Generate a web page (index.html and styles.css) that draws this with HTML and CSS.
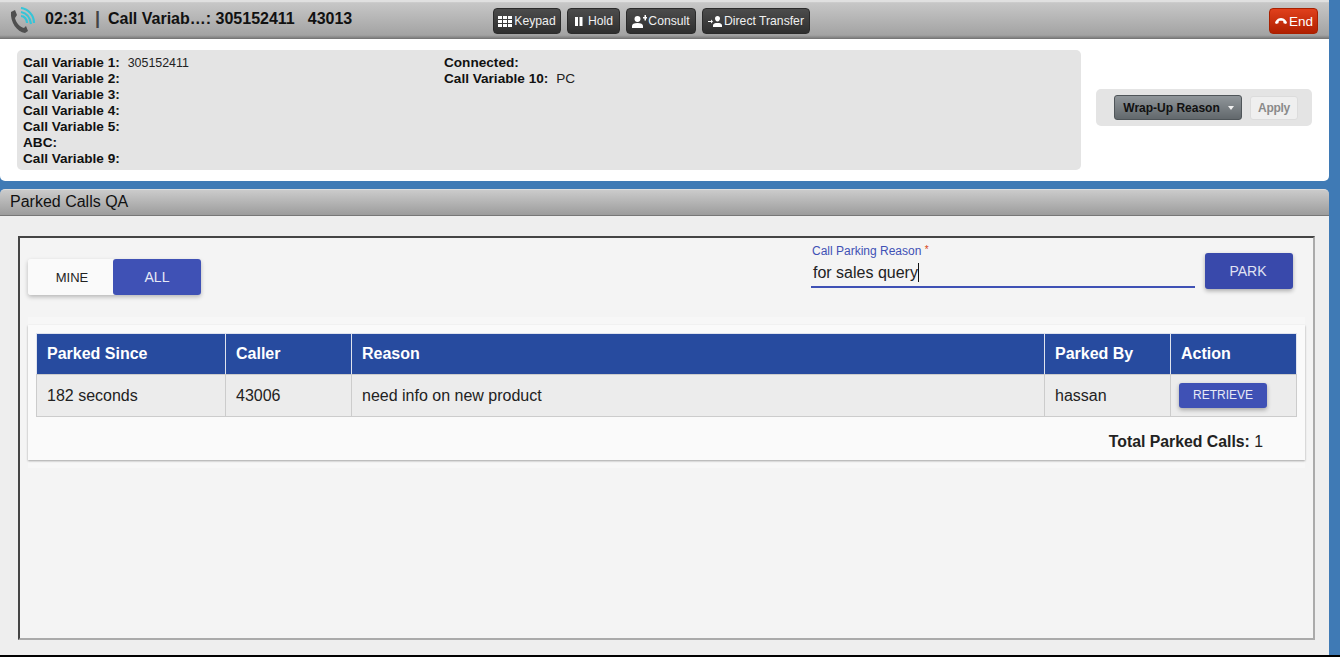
FILE: index.html
```html
<!DOCTYPE html>
<html lang="en">
<head>
<meta charset="utf-8">
<title>Parked Calls QA</title>
<link rel="stylesheet" href="styles.css">
</head>
<body>
<div class="app">
  <section class="call-panel">
    <header class="call-bar">
      <div class="call-info">
        <svg class="phone-icon" width="26" height="27" viewBox="0 0 26 27">
          <path d="M1 5 L5 3 L7 8 L5 11 C6 16 10 20 14 21 L16 19 L18 24 L15 26 C7 25 0 15 1 5 Z" fill="#4f4f4f"/>
          <path d="M11 1 C18 2 24 8 24 16" fill="none" stroke="#35c5d8" stroke-width="2.200"/>
          <path d="M11 5 C16 6 20 10 21 17" fill="none" stroke="#35c5d8" stroke-width="2.200"/>
          <path d="M11 9 C14 9 17 12 17 16" fill="none" stroke="#35c5d8" stroke-width="2.200"/>
        </svg>
        <span class="timer">02:31</span>
        <span class="sep">|</span>
        <span class="call-var">Call Variab…: 305152411</span>
        <span class="call-ext">43013</span>
      </div>
      <div class="call-actions">
        <button class="dark-btn btn-keypad">
          <svg width="15" height="11" viewBox="0 0 15 11"><path fill="#fff" d="M0 0h4v3H0zM5 0h4v3H5zM10 0h4v3h-4zM0 4h4v3H0zM5 4h4v3H5zM10 4h4v3h-4zM0 8h4v3H0zM5 8h4v3H5zM10 8h4v3h-4z"/></svg>Keypad</button>
        <button class="dark-btn btn-hold">
          <svg width="10" height="9" viewBox="0 0 10 9"><path fill="#fff" d="M1 0h3v9H1zM5.500 0h3v9h-3z"/></svg>Hold</button>
        <button class="dark-btn btn-consult">
          <svg width="15" height="13" viewBox="0 0 15 13"><path fill="#fff" d="M5.500 1a3 3 0 0 1 3 3c0 1.500-.8 3-3 3s-3-1.500-3-3a3 3 0 0 1 3-3zM0 13v-2c0-2 2-3 5.500-3s5.500 1 5.500 3v2zM11 2h1.500V0H14v2h1v1.500h-1v2h-1.500v-2H11z"/></svg>Consult</button>
        <button class="dark-btn btn-direct">
          <svg width="15" height="11" viewBox="0 0 15 11"><path fill="#fff" d="M9.500 0a2.500 2.500 0 0 1 2.500 2.500c0 1.500-1 3-2.500 3S7 4 7 2.500A2.500 2.500 0 0 1 9.500 0zM5 11V9.500C5 7.500 7 7 9.500 7S14 7.500 14 9.500V11zM0 5h3V3.500L5 5.500 3 7.500V6H0z"/></svg>Direct Transfer</button>
      </div>
      <button class="end-btn">
        <svg width="14" height="6" viewBox="0 0 14 7"><path fill="#fff" d="M0 5C2 1 5 0 7 0s5 1 7 5l-1 2-3-1-.5-2.500C8 3 6 3 4.500 3.500L4 6l-3 1z"/></svg>End</button>
    </header>
    <div class="call-body">
      <div class="vars">
        <div class="vars-col vars-left">
          <div class="var"><b>Call Variable 1:</b><span>305152411</span></div>
          <div class="var"><b>Call Variable 2:</b></div>
          <div class="var"><b>Call Variable 3:</b></div>
          <div class="var"><b>Call Variable 4:</b></div>
          <div class="var"><b>Call Variable 5:</b></div>
          <div class="var"><b>ABC:</b></div>
          <div class="var"><b>Call Variable 9:</b></div>
        </div>
        <div class="vars-col">
          <div class="var"><b>Connected:</b></div>
          <div class="var"><b>Call Variable 10:</b><span class="var-wide">PC</span></div>
        </div>
      </div>
      <div class="wrapup">
        <button class="wrapup-btn">Wrap-Up Reason<i class="caret"></i></button>
        <button class="apply-btn">Apply</button>
      </div>
    </div>
  </section>

  <section class="parked-panel">
    <h2 class="parked-title">Parked Calls QA</h2>
    <div class="parked-body">
      <div class="frame">
        <div class="controls">
          <div class="toggle">
            <button class="toggle-item">MINE</button>
            <button class="toggle-item active">ALL</button>
          </div>
          <div class="park-form">
            <div class="field">
              <label class="field-label">Call Parking Reason <em>*</em></label>
              <div class="field-input">for sales query<i class="cursor"></i></div>
            </div>
            <button class="park-btn">PARK</button>
          </div>
        </div>
        <div class="card-band">
          <div class="card">
            <table class="calls">
              <colgroup>
                <col class="c1"><col class="c2"><col class="c3"><col class="c4"><col class="c5">
              </colgroup>
              <thead>
                <tr><th>Parked Since</th><th>Caller</th><th>Reason</th><th>Parked By</th><th>Action</th></tr>
              </thead>
              <tbody>
                <tr>
                  <td>182 seconds</td><td>43006</td><td>need info on new product</td><td>hassan</td>
                  <td class="action"><button class="retrieve-btn">RETRIEVE</button></td>
                </tr>
              </tbody>
            </table>
            <div class="total"><b>Total Parked Calls:</b> 1</div>
          </div>
        </div>
      </div>
    </div>
  </section>
</div>
</body>
</html>
```
FILE: styles.css
```css
* { box-sizing: border-box; }
html, body { margin: 0; height: 100%; overflow: hidden; }
body {
  background: #000;
  font-family: "Liberation Sans", Arial, sans-serif;
  color: #111;
}
button { font-family: inherit; cursor: pointer; }
.app {
  width: 1340px;
  height: 655px;
  background: #3f7ab5;
  padding-right: 11px;
  display: flex;
  flex-direction: column;
}
.call-panel { height: 181px; flex: none; display: flex; flex-direction: column; }
.call-bar {
  height: 39px;
  flex: none;
  display: flex;
  align-items: flex-start;
  background: linear-gradient(#cfcfcf 0, #c6c6c6 4%, #a3a3a3 92%, #7f7f7f 100%);
  border-top: 2px solid #e0e0e0;
  border-bottom: 1px solid #777;
}
.call-info {
  width: 493px;
  height: 36px;
  flex: none;
  display: flex;
  align-items: center;
  padding-left: 10px;
  font-size: 16px;
  font-weight: bold;
  color: #111;
  white-space: pre;
}
.phone-icon { flex: none; margin-right: 9px; margin-top: 1px; }
.call-info .timer { margin-top: -3px; }
.call-info .sep { margin: -3px 8px 0 9px; color: #444; font-weight: bold; font-size: 18px; }
.call-info .call-var { margin-top: -3px; }
.call-info .call-ext { margin: -3px 0 0 13px; }
.call-actions { display: flex; gap: 6px; margin-top: 6px; }
.dark-btn {
  height: 26px;
  padding: 0;
  display: flex;
  align-items: center;
  justify-content: center;
  gap: 1px;
  font-size: 12.200px;
  color: #f0f0f0;
  background: linear-gradient(#4c4c4c, #2f2f2f);
  border: 1px solid #2b2b2b;
  border-radius: 4px;
  white-space: nowrap;
}
.btn-keypad { width: 68px; }
.btn-hold { width: 53px; gap: 4px; }
.btn-consult { width: 70px; }
.btn-direct { width: 108px; }
.end-btn {
  margin: 6px 11px 0 auto;
  width: 49px;
  height: 26px;
  padding: 0 3px;
  display: flex;
  align-items: center;
  justify-content: center;
  gap: 1px;
  font-size: 13.500px;
  color: #fff;
  background: linear-gradient(#e0401c, #b12000);
  border: 1px solid #a82000;
  border-radius: 4px;
}
.call-body {
  flex: 1;
  display: flex;
  align-items: flex-start;
  background: #fff;
  padding: 11px 17px 0 17px;
  border-radius: 0 0 5px 5px;
}
.vars {
  width: 1064px;
  height: 120px;
  flex: none;
  display: flex;
  background: #e4e4e4;
  border-radius: 5px;
  padding: 5px 6px 3px;
  font-size: 13.600px;
  line-height: 16px;
}
.vars-left { width: 421px; flex: none; }
.var { height: 16px; white-space: nowrap; }
.var b { font-weight: bold; }
.var span { margin-left: 8px; font-size: 12.400px; color: #222; }
.var .var-wide { font-size: 13.600px; }
.wrapup {
  margin: 39px 0 0 15px;
  width: 216px;
  height: 37px;
  display: flex;
  align-items: center;
  justify-content: flex-end;
  gap: 8px;
  padding: 0 14px 0 18px;
  background: #e4e4e4;
  border-radius: 5px;
}
.wrapup-btn {
  width: 128px;
  height: 25px;
  padding: 0 2px 0 3px;
  display: flex;
  align-items: center;
  justify-content: center;
  gap: 8px;
  font-size: 12px;
  font-weight: bold;
  color: #111;
  background: linear-gradient(#90969a, #62686c);
  border: 1px solid #4f5559;
  border-radius: 3px;
  white-space: nowrap;
}
.caret {
  width: 0;
  height: 0;
  border-left: 3px solid transparent;
  border-right: 3px solid transparent;
  border-top: 4px solid #f0f0f0;
}
.apply-btn {
  width: 48px;
  height: 24px;
  padding: 0;
  font-size: 12px;
  letter-spacing: -.3px;
  font-weight: bold;
  color: #8a8a8a;
  background: #efefef;
  border: 1px solid #dcdcdc;
  border-radius: 3px;
}
.parked-panel { margin-top: 8px; flex: 1; display: flex; flex-direction: column; }
.parked-title {
  margin: 0;
  height: 27px;
  flex: none;
  padding: 3px 0 0 10px;
  font-size: 16px;
  line-height: 18px;
  font-weight: normal;
  color: #111;
  background: linear-gradient(#cbcbcb, #9c9c9c);
  border-top: 1px solid #dcdcdc;
  border-bottom: 1px solid #777;
  border-radius: 5px 5px 0 0;
}
.parked-body { flex: 1; background: #eee; padding: 20px 14px 15px 18px; }
.frame {
  height: 404px;
  padding: 0 8px;
  background: #f4f4f4;
  border: 2px solid;
  border-color: #444 #aaa #aaa #444;
}
.controls { height: 79px; display: flex; align-items: flex-start; justify-content: space-between; }
.toggle {
  margin-top: 21px;
  display: flex;
  height: 36px;
  border-radius: 3px;
  box-shadow: 0 2px 4px rgba(0,0,0,.25);
}
.toggle-item {
  width: 85px;
  border: 0;
  padding: 0 0 0 3px;
  font-size: 13px;
  color: #222;
  background: #fafafa;
  border-radius: 3px 0 0 3px;
}
.toggle-item.active {
  width: 88px;
  padding: 0;
  font-size: 14px;
  color: #e8eaf6;
  background: #3f51b5;
  border-radius: 3px;
}
.park-form { display: flex; align-items: flex-start; gap: 10px; margin-right: 12px; }
.field { width: 384px; padding-top: 4px; }
.field-label { display: block; font-size: 12px; line-height: 15px; color: #3f51b5; padding-left: 1px; }
.field-label em { color: #d84315; font-style: normal; font-size: 10px; vertical-align: 2px; }
.field-input {
  height: 29px;
  padding: 4px 0 0 2px;
  font-size: 16px;
  line-height: 20px;
  color: #222;
  border-bottom: 2px solid #3f51b5;
}
.cursor {
  display: inline-block;
  width: 1px;
  height: 19px;
  background: #111;
  vertical-align: -4px;
}
.park-btn {
  margin-top: 15px;
  width: 88px;
  height: 36px;
  padding: 0 2px 0 0;
  border: 0;
  font-size: 14px;
  color: #e0e3f3;
  background: #3949ab;
  border-radius: 3px;
  box-shadow: 0 2px 4px rgba(0,0,0,.3);
}
.card-band { padding: 8px 0; background: #f7f7f7; }
.card {
  height: 135px;
  padding: 8px 8px 0;
  background: #fafafa;
  box-shadow: 0 1px 2px rgba(0,0,0,.35);
}
.calls {
  width: 1260px;
  table-layout: fixed;
  border-collapse: collapse;
  font-size: 16px;
}
.c1 { width: 189px; }
.c2 { width: 126px; }
.c3 { width: 693px; }
.c4 { width: 126px; }
.c5 { width: 126px; }
.calls th {
  height: 41px;
  padding: 0 10px;
  text-align: left;
  font-weight: bold;
  color: #fff;
  background: #274b9f;
  border: 1px solid #dfe3ee;
  border-bottom-color: #ccc;
}
.calls td {
  height: 42px;
  padding: 0 10px;
  color: #222;
  background: #ececec;
  border: 1px solid #ccc;
}
.calls td.action { padding: 0 8px; }
.retrieve-btn {
  width: 88px;
  height: 25px;
  padding: 0 0 2px;
  border: 0;
  display: block;
  font-size: 12px;
  color: #e8eaf6;
  background: #3f51b5;
  border-radius: 3px;
  box-shadow: 0 2px 4px rgba(0,0,0,.3);
}
.total {
  margin-top: 16px;
  padding-right: 34px;
  text-align: right;
  font-size: 15.800px;
  line-height: 18px;
  color: #222;
}
```
